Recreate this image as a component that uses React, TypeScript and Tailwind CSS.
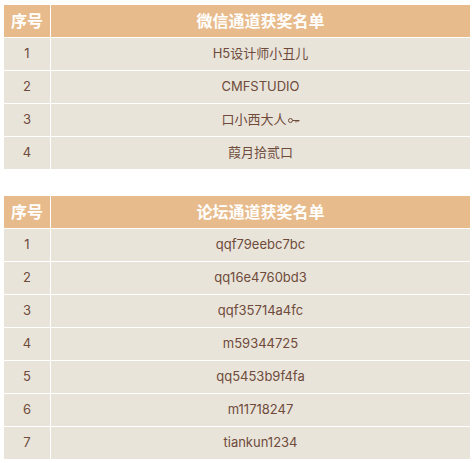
import React from "react";

const KeyIcon = () => (
  <svg width="12" height="7" viewBox="0 0 12 7" className="inline-block ml-[1px] align-middle" fill="none" stroke="#6e4b3b" strokeWidth="1">
    <circle cx="2.5" cy="3.5" r="2" />
    <path d="M4.5 3.5 H11.5 M8 3.5 V5.5 M10 3.5 V5" />
  </svg>
);

type Row = { n: number; name: React.ReactNode };

const Table = ({ title, rows }: { title: string; rows: Row[] }) => (
  <div className="grid grid-cols-[46px_1fr] gap-px w-[466px] ml-[4px] bg-white">
    <div className="h-[32px] bg-[#e8bb8c] flex items-center justify-center text-white font-bold text-[16px]">序号</div>
    <div className="h-[32px] bg-[#e8bb8c] flex items-center justify-center text-white font-bold text-[16px]">{title}</div>
    {rows.map((r) => (
      <React.Fragment key={r.n}>
        <div className="h-[32px] bg-[#e9e4da] flex items-center justify-center text-[#6e4b3b] text-[13px]">{r.n}</div>
        <div className="h-[32px] bg-[#e9e4da] flex items-center justify-center text-[#6e4b3b] text-[13px]">{r.name}</div>
      </React.Fragment>
    ))}
  </div>
);

export default function App() {
  return (
    <div
      className="bg-white w-[476px] h-[463px] pt-[5px]"
      style={{ fontFamily: '"Inter", "Noto Sans CJK SC", sans-serif' }}
    >
      <Table
        title="微信通道获奖名单"
        rows={[
          { n: 1, name: "H5设计师小丑儿" },
          { n: 2, name: "CMFSTUDIO" },
          { n: 3, name: <span className="flex items-center">口小西大人<KeyIcon /></span> },
          { n: 4, name: "葭月拾贰口" },
        ]}
      />
      <div className="h-[27px]" />
      <Table
        title="论坛通道获奖名单"
        rows={[
          { n: 1, name: "qqf79eebc7bc" },
          { n: 2, name: "qq16e4760bd3" },
          { n: 3, name: "qqf35714a4fc" },
          { n: 4, name: "m59344725" },
          { n: 5, name: "qq5453b9f4fa" },
          { n: 6, name: "m11718247" },
          { n: 7, name: "tiankun1234" },
        ]}
      />
    </div>
  );
}
